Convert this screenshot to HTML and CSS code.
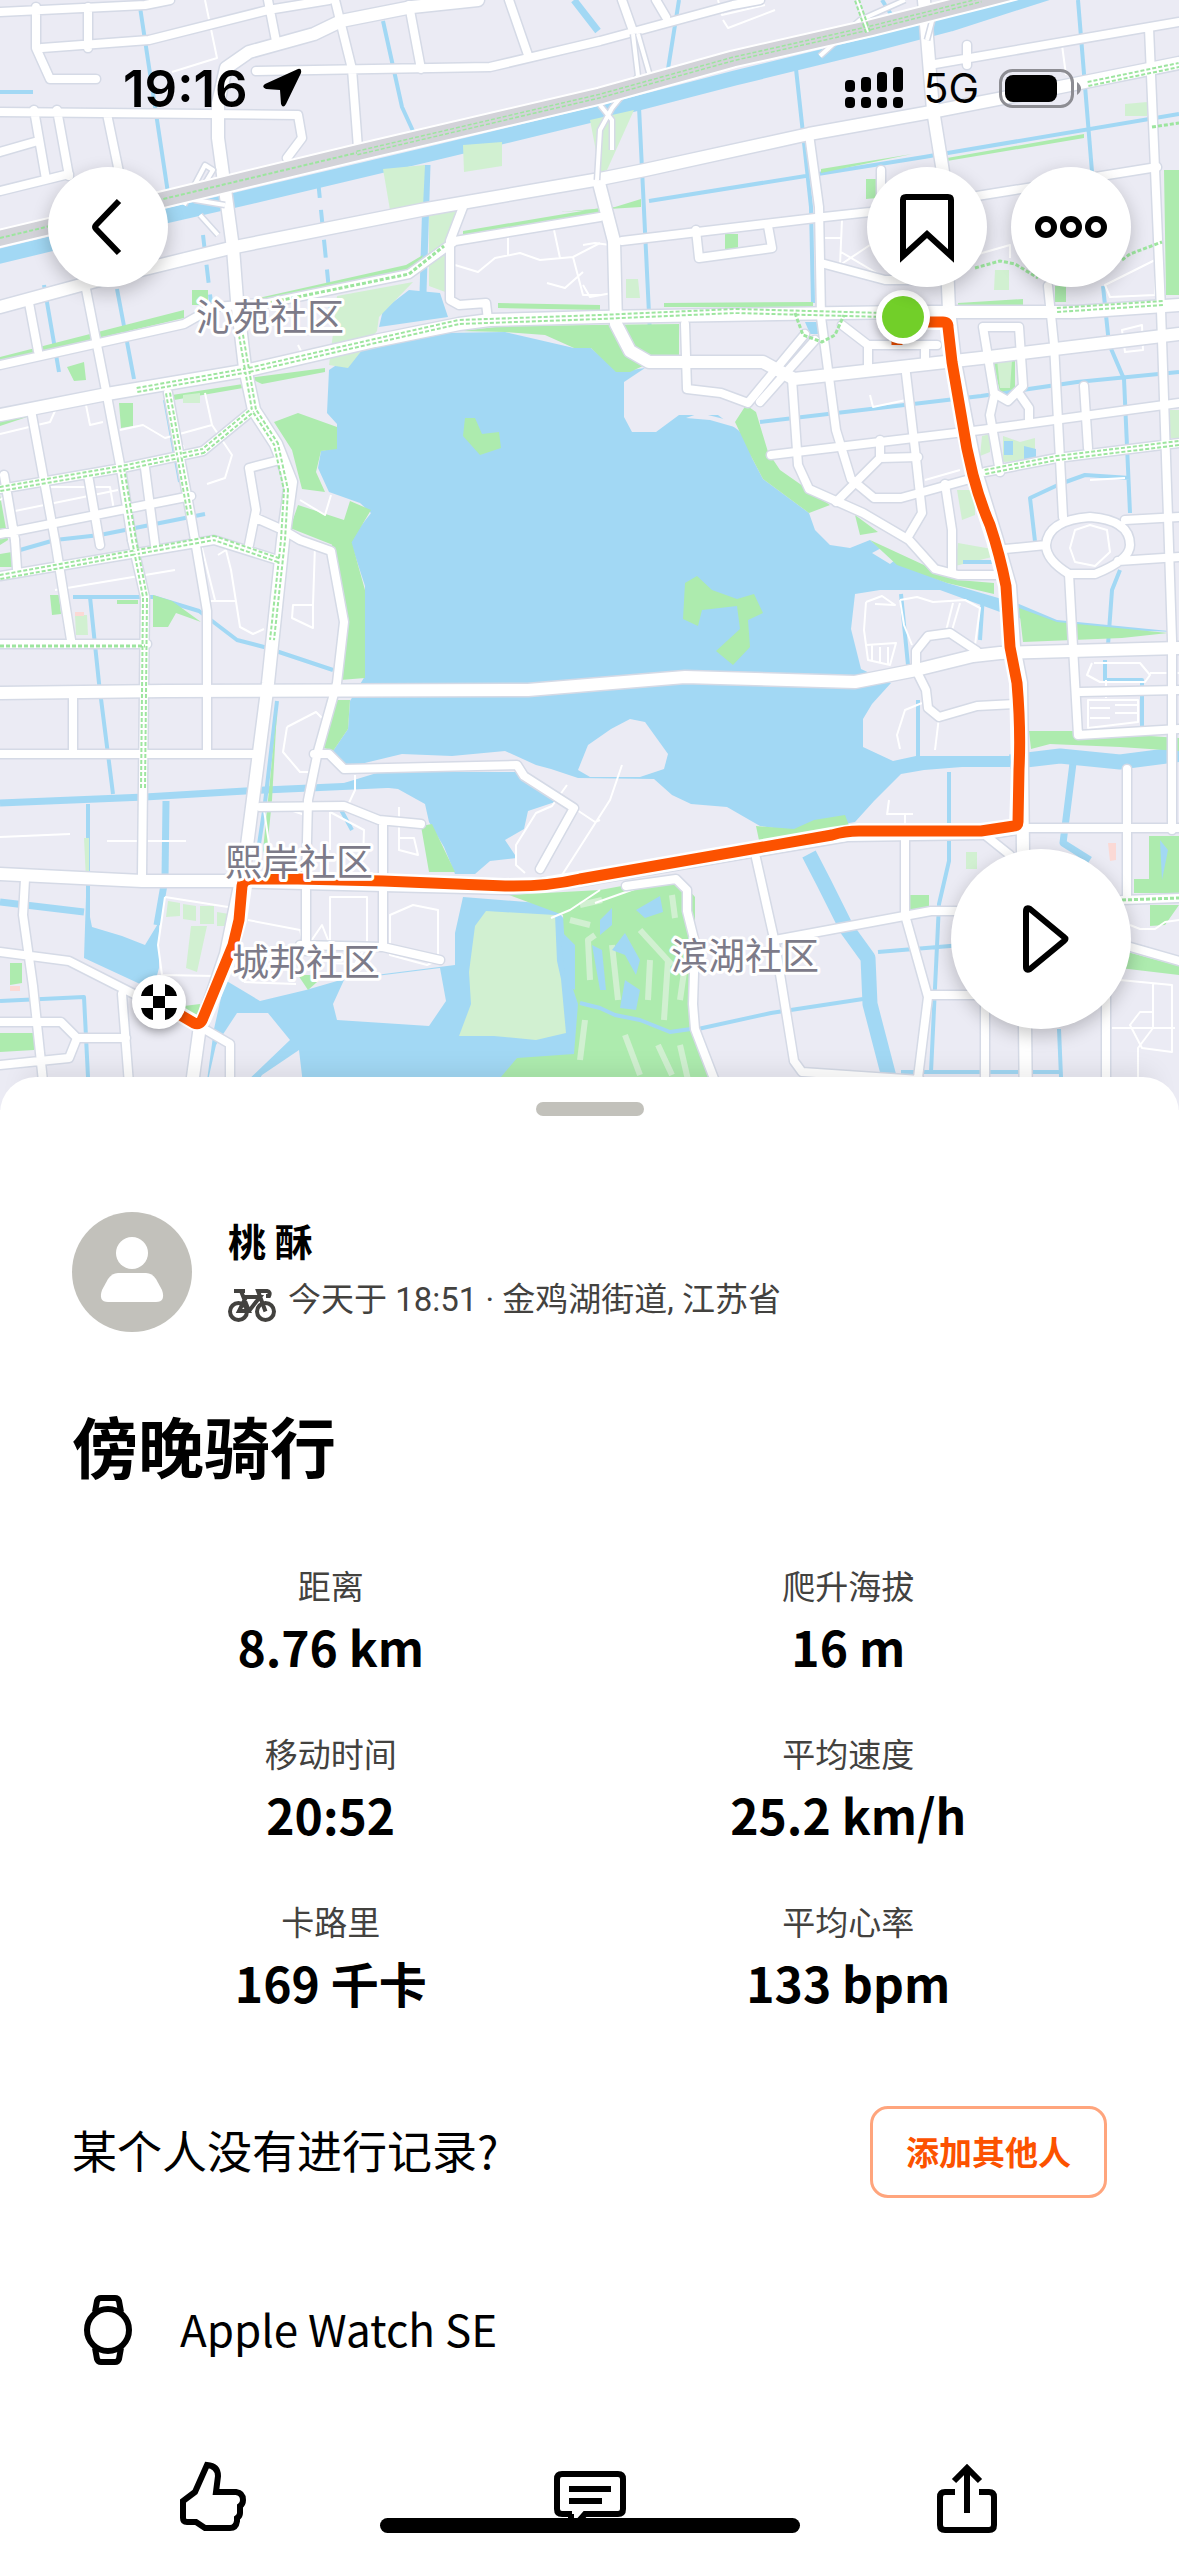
FILE: index.html
```html
<!DOCTYPE html>
<html lang="zh-CN">
<head>
  <meta charset="UTF-8">
  <title>傍晚骑行</title>
  <meta name="viewport" content="width=device-width, initial-scale=1.0, viewport-fit=cover">
  <link rel="stylesheet" href="styles.css">
</head>
<body>
  <div class="map">
    <svg class="map-canvas" viewBox="0 0 1179 1110" preserveAspectRatio="xMidYMin slice" aria-hidden="true">
      <defs>
        <!-- roads are drawn twice: grey casing, then white fill -->
        <g id="roads-big">
          <path d="M0 693L165 691L528 690L600 684L685 677L855 682L916 670L973 656L1000 653L1179 648"/>
          <path d="M0 415L107 394L249 370L375 341L459 324L490 320L600 317L905 312L1077 312L1179 305"/>
          <path d="M478 0L412 7L341 21L314 34L249 52L226 68L218 103V138L233 248L237 300L245 368L254 410L276 444L291 482L283 540L268 683L245 861L239 890L226 954L199 1033L193 1077V1110"/>
          <path d="M0 307L92 282L230 248L421 210L600 179L645 170L809 134L931 112L1060 87L1179 63"/>
          <path d="M0 874L142 881H230L383 885L509 888L580 880L847 835L985 833L1018 828"/>
          <path d="M924 0L933 110L943 172L949 310L955 362L966 420L977 475L997 540L1010 586L1014 647L1021 683L1023 850L1026 1110"/>
          <path d="M599 183L614 241L616 324L630 351L649 362H763L794 379L981 358L1179 334"/>
        </g>
        <g id="roads-mid">
          <path d="M809 134L819 207L821 317L836 430L851 479L874 498H901L970 479"/>
          <path d="M792 379L798 465L809 489L863 513L909 540L935 569L958 575H996"/>
          <path d="M905 365L916 458L922 513L909 535M945 484L952 530V570"/>
          <path d="M771 455L981 430L1179 403M985 472L1057 458L1179 443"/>
          <path d="M1048 286L1054 344L1063 517M1069 574L1073 647L1078 735L1179 729"/>
          <path d="M1149 28L1161 310L1168 517L1172 640V830M935 64L1179 22M967 45V65"/>
          <path d="M622 241L824 217L870 212L977 196L1157 167M821 263L885 280L945 280"/>
          <path d="M685 324L687 389L721 393L748 403L805 334M760 402L815 340M842 325L868 345H937M868 345V372M925 345V360"/>
          <path d="M983 327H1019L1023 386L1008 401L994 393L983 327M994 397L990 415L1000 472M1020 395L1029 408V420"/>
          <path d="M1084 386L1088 448M836 502L880 458L918 457M880 458V440"/>
          <path d="M1046 545Q1048 520 1090 517Q1130 520 1130 545Q1130 560 1095 574H1069Q1046 560 1046 545ZM1125 520L1179 517M1118 561L1179 557M1005 549L1046 545"/>
          <path d="M905 838V915L928 997L914 1110M756 858L775 943L794 1061L802 1072L920 1080"/>
          <path d="M775 940L931 911H962M928 995H985V1110M626 886L676 879L687 890V911L695 943L693 1004L695 1029L726 1110"/>
          <path d="M1127 769V897M1020 828H1179M1122 900L1179 898M1120 944L1179 961M1106 986V1110M985 835L1010 855"/>
          <path d="M916 670V651L928 636L950 633L977 651M916 670L926 690L928 708L939 717L977 706L1015 704M1080 692L1179 690"/>
          <path d="M25 879L23 915L33 986L46 1110M0 952L69 961L134 994M122 994L131 1110M0 1022H61L77 1038H126M77 1038L69 1058L0 1065M199 1026L230 1044V1110"/>
          <path d="M306 890V951M383 822V947L440 960M260 807L344 806L379 820L421 824M300 945L383 947"/>
          <path d="M283 530L300 540L331 551L344 622L337 683L318 751L308 800L306 880M314 754H329L344 769L517 765L524 776L574 808L540 869"/>
          <path d="M0 754H253M73 697V754M195 540L207 611V754M132 540L145 597L142 876M31 410L55 540L71 640M0 644H147M0 576L214 540L281 561M15 540L17 569"/>
          <path d="M0 489L122 468L203 451L253 410M0 534L191 496M86 289L107 396L122 475L132 540M168 393L191 517L195 540M4 475L15 540M88 475L100 545M145 468L155 545M276 461L249 468L256 510L249 545M256 518L283 530"/>
          <path d="M0 365L184 324L214 307L268 303L409 274L455 241L600 217M463 207L450 241V300L459 305L486 303L488 320M29 303L38 351"/>
          <path d="M0 152L38 141M0 191L69 174M34 110L46 179M57 110L69 176M107 114L119 172M0 112L298 115L302 138L287 158"/>
          <path d="M0 12L145 5L170 0M36 7V48L50 79H96M42 48L149 40L268 10L329 0M88 7V48M268 0L276 41M335 0L352 69L358 148M256 71L490 67L600 41L733 5L760 0M409 5L421 69M509 0L528 55M622 0L633 31M656 0L666 17"/>
          <path d="M696 230L699 258L772 248L768 226M881 170V205"/>
        </g>
        <path id="railway" d="M-20 243L161 200L360 152L600 96L733 59L870 28L981 0L1050 -18"/>
        <path id="ramps" d="M633 34L638 76L612 108L600 130L597 180M638 34L650 76M820 56L860 20L905 0M927 40L935 10M600 105L612 120V150M184 205L205 165L213 170L195 200L225 205M200 215L218 235"/>
        <path id="cycle-lanes" d="M137 390L249 370L375 341L459 322L600 317L735 311L885 315M241 335L254 410L276 444L286 490L283 540L272 640M857 0L868 32M1057 310L1163 303M985 472L1057 458L1179 443M1088 84L1179 65M0 577L214 538L281 561M122 468L134 540L145 597L143 790M168 393L190 516M0 489L122 468L203 451L253 410"/>
      </defs>

      <rect width="1179" height="1110" fill="#ebebf4"/>

      <!-- lake and ponds -->
      <g class="water">
        <path d="M329 370L383 334L505 332L574 348H591L618 372L645 368L624 382V417L632 432H656L679 415H718L738 430L746 437L752 458L763 479L786 496L809 513L815 530L830 545L850 548L870 540L897 563L947 583L1019 604L1057 620L1179 632L1050 628L1000 612L940 590L905 590L880 590L855 594L851 629L861 669L891 683L872 704L863 719V747L893 761L916 756H1010V767H962L924 770L901 774L874 801L855 822L800 832L760 826L727 807L691 804L672 795L654 779L578 778L551 769L536 765L505 751L452 756L402 754L344 768L333 751L348 729L350 701L365 676V586L350 540L371 513L360 503L329 492L318 468L321 451L337 448V424L327 413Z"/>
        <path d="M344 783L380 772L524 772L555 802L528 811L524 829L505 840L517 858L490 861L475 874H455L444 847L429 822L425 804L398 789Z"/>
        <path d="M409 290L440 293L448 317L379 327L383 310Z"/>
        <path d="M86 897L92 927L122 936L145 945L159 922V968L153 990L84 958Z"/>
        <path d="M225 980L260 1001L306 990L344 979L455 965V933L463 897L551 904L600 960V1110H203L214 1029Z"/>
      </g>
      <path d="M588 745L611 729L630 719L645 722L668 754L664 769L640 777H590L578 770Z" fill="#ebebf4"/>
      <path d="M237 1013H268L290 1040L243 1085H207L216 1045ZM299 1050L306 1110H240L262 1075ZM344 980L333 1004L337 1020L429 1026L446 1001L440 968Z" fill="#ebebf4"/>
      <path d="M686 418L700 413L728 420L738 428L710 420ZM872 553L885 546L900 556L890 564Z" fill="#ebebf4"/>

      <!-- canals -->
      <g class="canal">
        <path d="M170 0L140 7L168 193M117 289L134 379M165 400L180 482M383 21L402 107L413 131M0 92H33M44 285L59 372" />
        <path d="M679 0L668 69M639 107L651 355M796 69L811 207L813 303M649 201L924 157L1179 114M1078 0L1092 172M1103 286L1109 344L1124 379L1130 513M760 422L981 396L1077 382L1179 372M882 0L892 16M1036 550L1030 498L1060 484L1085 475L1130 478"/>
        <path d="M949 772V861L939 904L931 1072M918 700V758M901 594L908 665M698 1029L771 1013L863 999M878 952L962 945M1059 1029L1061 1077M901 1072H1060M1120 570L1112 590L1108 645M1105 660V680H1142V738"/>
        <path d="M73 597H153L199 611L237 640L264 647L333 670M90 597L99 683L113 794M277 701L264 811L258 851M88 804V920M0 1001L84 997L88 1077M20 550L55 540L100 535L205 514M983 595L980 640M340 808L352 830"/>
        <path d="M203 235L213 320M318 180L331 310" stroke-dasharray="18 12"/>
      </g>
      <g class="canal wide">
        <path d="M574 0L598 31M427 165L423 293M0 803L145 797L245 791L398 784M166 801L165 879L157 925M0 902L84 912M1073 763L1063 843L1090 860"/>
      </g>
      <g class="canal river">
        <path d="M-20 261L161 217L236 200L430 154L600 113L735 78L870 45L950 24L1050 -8"/>
        <path d="M809 854L824 883L847 929L868 958L870 1004L889 1077V1110M1010 762L1060 756L1120 762L1190 753"/>
      </g>

      <!-- parks -->
      <g class="park">
        <path d="M274 422L298 413L337 427V449L321 451L316 472L325 492L302 489L292 450ZM298 505L344 520L350 501L371 510L356 535L350 545L333 545L290 528ZM331 540H351L365 590V678L340 680L346 625Z"/>
        <path d="M330 700H350L348 729L333 751L318 746ZM465 418H475L482 434L499 432L501 448L480 455L463 436Z"/>
        <path d="M685 583L697 576L712 590L737 599L754 594L763 613L748 620L750 647L733 665L716 651L740 629L737 606L702 610L698 626L683 619Z"/>
        <path d="M459 331L505 326L679 324V360L645 365L630 372H616L591 348H574L545 335L505 332Z"/>
        <path d="M746 405L756 412L768 452L780 470L830 505L809 513L786 496L763 479L752 458L735 422ZM870 540L924 565L958 580L994 583V594L947 583L897 565ZM855 515L878 532L860 535Z"/>
        <path d="M1019 608L1057 622L1168 633L1122 638L1023 642ZM1029 731H1076L1179 738V751L1120 747L1050 744L1031 749ZM1164 170H1179V295H1166Z"/>
        <path d="M991 353H1015V389L1000 392ZM1149 836H1179V893H1134V879H1149ZM1150 905H1179L1165 925L1150 926ZM1120 950L1179 966V975L1120 968Z"/>
        <path d="M910 895H929V910H910ZM866 179H877V198L866 199ZM725 234H738V249H725ZM664 303L813 302V307H664ZM958 303L1023 299V305L958 307ZM821 169L912 154L821 173ZM947 158L1084 134V138L947 161ZM1055 286H1066V302H1055Z"/>
        <path d="M249 300L406 265L423 255L418 270L260 304ZM0 357L184 310V318L0 361ZM463 231L600 208V213L463 236ZM498 303L600 305V310L498 308ZM119 403H133V426L121 428ZM67 367L84 362L86 380L74 381ZM172 395L243 384V388L174 400ZM192 290H208V305H192ZM249 378L325 368V372L262 384ZM0 420L30 416L0 426ZM0 495L8 540L0 545ZM615 207L641 199V207L560 212Z"/>
        <path d="M153 595L172 601L201 622L176 613L168 627H153ZM50 595H59L61 614L52 615ZM0 554L12 552V567H0ZM421 826L432 824L455 872H429ZM0 1033H34V1050L0 1052ZM10 963H22V983L10 985ZM298 975H325L308 990ZM184 1006L200 1004L198 1022ZM117 600H138V604H117ZM277 710L272 800L266 860L263 850ZM756 826L794 829L814 820L845 815L850 828L760 845Z"/>
        <path d="M509 895L600 890L676 876L695 897V951L691 1004L714 1077L726 1110H495L501 1077L517 1058L574 1054L578 1004L566 968L563 915Z"/>
      </g>
      <g class="park-light">
        <path d="M486 911L555 915L557 961L561 979L566 1033L536 1040L494 1036L459 1036L471 1004L469 972L475 926Z"/>
        <path d="M383 169L425 165L423 207L390 210ZM463 145L502 142V166L464 172ZM429 213L459 210L448 293L429 286ZM337 296L413 282L379 317L377 331L348 368L329 365L333 334ZM590 120L634 110L607 170L600 172Z"/>
        <path d="M626 279H638L640 298H626ZM997 360H1012L1010 388H1000ZM995 270H1009V290H994ZM966 852H977V869H966ZM75 615H87L88 635H76ZM183 395L200 393V403H183ZM168 901L180 903V916L166 917ZM183 904L196 906V921L183 919ZM200 906H214V924H200ZM217 912L229 914V926H217ZM191 926H207L197 972L186 968ZM958 543L992 549V557L955 566ZM1125 104L1147 102V116H1125ZM982 436L990 434V452L980 456ZM1003 436L1020 442L1035 438V460L1003 462ZM957 490H975V515L962 520ZM1170 410H1179V438H1170ZM84 838H89V880H86Z"/>
      </g>
      <g class="fairway">
        <path d="M590 980L588 940L595 935M612 945L618 1000M640 930L672 965M672 895L675 918M650 960L648 1000M668 960L664 1020M685 965L680 1000M625 1035L640 1075M658 1045L672 1075M680 1045L688 1080M580 905L602 900M570 920L590 925M585 1020L580 1060"/>
      </g>
      <g class="water">
        <path d="M600 920L612 908V925L600 935ZM636 910L660 896L663 912L645 918ZM592 945L602 950L606 990H600ZM612 950L625 933L640 960L636 975L625 955ZM625 980L640 990L636 1010L620 1008ZM1004 441H1013V455H1004ZM1024 446L1036 449V459H1024ZM1160 840L1168 850L1162 880ZM805 322H818V334H810ZM560 930L575 945V990L566 985Z"/>
      </g>
      <path class="canal-line" d="M580 1003L600 1008L615 1015L640 1020L670 1032L698 1028M963 562H993"/>
      <path d="M1108 843H1116V860L1110 861ZM75 612H84V616H75ZM10 986H20V991H10Z" fill="#fbd9d5"/>

      <!-- footpaths -->
      <g class="paths">
        <path d="M205 0L217 58L172 72M0 434L50 422L60 400L84 395L90 425L103 422M0 500L18 487H110L114 510L70 522M120 430L143 425L165 438L212 425L205 393M212 425L232 455L225 478L207 484M10 512L118 490M12 532L180 498M300 500L325 515L331 495M298 345L303 355M183 445L190 500L215 600"/>
        <path d="M508 235V255M554 230L560 258M455 265L478 272L495 258L520 253L540 260L573 257L600 243M573 257L583 295L600 295M583 272L565 288L547 283"/>
        <path d="M583 245L595 243L610 245M583 285L590 297L612 293M842 220L840 265L870 245M825 238H842M841 252L880 275M870 395L873 407L906 400M925 480L960 470M965 200L1015 192M975 255L1010 245V258M1105 285L1155 260V295L1110 297ZM1122 330L1142 325L1143 350L1125 352Z"/>
        <path d="M718 0L722 15L765 5M723 20L728 28L775 10M1062 45L1066 75M1090 480L1125 478"/>
        <path d="M0 837L70 834M107 841H186M264 810H290L305 815M264 810L270 850M330 812L364 830L363 860M330 812V850M399 807V850L418 855L414 838H398M330 897H367V945L355 964L330 963ZM390 915L413 905L438 910V960L427 965L390 955ZM248 920L300 930L305 950L322 925L330 945M244 982L296 984M165 897L228 907M165 897L158 945L162 975L215 976"/>
        <path d="M287 727L316 712L322 718M287 727L283 752L300 772H310M293 605H313V628L292 618ZM315 545L313 605M218 555L226 550L231 570L240 627L253 634L264 629M210 601H235M55 590L175 570M355 775V790L348 805M567 785L552 806L536 813L516 845V865L525 873M574 808L595 822L600 820M622 765L610 800L580 847L562 875M551 918L570 910L600 890M595 903L640 887"/>
        <path d="M866 602L864 630L868 660L890 665L896 643L866 645M866 602L882 596L895 605L875 604M872 645V660M880 647V662M888 647V664M900 600L917 597L933 602L965 600L980 608L975 645M953 603L945 635M960 603L950 637M900 600L904 625L912 645M922 703L905 710L897 735L900 749M939 717L935 750M887 815L889 800M887 814H913M905 815V830"/>
        <path d="M1070 548L1075 562L1095 566L1110 552L1107 530L1090 525L1075 530ZM1094 663H1140L1150 675L1145 682H1100L1087 675L1092 663M1088 700H1138V722L1088 728ZM1090 708H1110M1090 718H1110M1115 705H1138M1115 713H1138M1106 680V698M1150 673H1179M1130 925L1140 929H1155L1165 922L1179 920"/>
        <path d="M1120 980L1172 985V1052L1142 1048L1130 1025L1140 1012H1153V984M1153 1012V1028L1138 1048V1110M1112 1028H1175"/>
      </g>

      <!-- streets -->
      <g class="casing"><use href="#roads-mid" stroke-width="11"/><use href="#roads-big" stroke-width="15"/></g>
      <g class="street"><use href="#roads-mid" stroke-width="8"/><use href="#roads-big" stroke-width="12"/></g>

      <!-- railway -->
      <g class="rail">
        <use href="#ramps" stroke="#d5dae6" stroke-width="7"/>
        <use href="#ramps" stroke="#fff" stroke-width="4"/>
        <use href="#railway" stroke="#fff" stroke-width="19"/>
        <use href="#railway" stroke="#d3d3d9" stroke-width="15"/>
      </g>

      <!-- cycle lanes -->
      <g class="lane">
        <path d="M0 238L360 152" stroke-width="2"/>
        <path d="M357 153L600 96L733 59L870 28L981 0" stroke-width="5"/>
        <path class="lane-gap rail-gap" d="M357 153L600 96L733 59L870 28L981 0"/>
        <use href="#cycle-lanes" stroke-width="6"/>
        <use href="#cycle-lanes" class="lane-gap"/>
        <path d="M268 303L409 274L444 246M0 646H145M795 313L803 335L822 342L835 335L844 315M975 268L1000 261L1015 264L1038 278M1122 260L1130 254L1162 242M1122 900L1179 898M1152 127L1179 123" stroke-width="3"/>
      </g>

      <!-- recorded ride -->
      <path class="route-edge" d="M897 345V325L928 322H947L952 362L962 420L973 475L994 540L1006 586L1010 647L1017 683L1019 769L1017 826L981 831H859L832 835L580 879L543 885L505 886L383 881L245 879L239 920L226 965L203 1020L197 1024L165 1006"/>
      <path class="route" d="M897 345V325L928 322H943Q948 322 948 327L952 362L962 420Q966 448 973 475Q980 502 990 525Q1000 555 1006 586L1010 647L1017 683Q1021 730 1019 769L1018 822Q1018 826 1014 826L981 831H859Q845 831 832 835L580 879Q545 887 505 886L383 881L298 879H250Q243 880 242 886L239 920L233 945L203 1018Q200 1026 194 1023L165 1006"/>

      <g class="place">
        <text x="270" y="331">沁苑社区</text>
        <text x="299" y="876">熙岸社区</text>
        <text x="306" y="976">城邦社区</text>
        <text x="745" y="970">滨湖社区</text>
      </g>

      <!-- start / finish -->
      <g class="pin">
        <circle cx="903" cy="317" r="27" fill="#fff"/>
        <circle cx="903" cy="317" r="21" fill="#72cf29"/>
      </g>
      <g class="pin">
        <circle cx="159" cy="1002" r="27" fill="#fff"/>
        <path d="M141 996Q143 986 153 984V996ZM165 984Q175 986 177 996H165ZM153 996H165V1008H153ZM141 1008H153V1020Q143 1018 141 1008ZM165 1008H177Q175 1018 165 1020Z"/>
      </g>
    </svg>

    <div class="status-bar">
      <div class="status-left">
        <span class="time">19:16</span>
        <svg class="location-icon" viewBox="0 0 40 40" aria-hidden="true"><path d="M36 1Q40 0 39 5L24 36Q21 41 19 36L18 22L4 21Q-1 19 3 16Z"/></svg>
      </div>
      <div class="status-right">
        <svg class="signal-icon" viewBox="0 0 58 42" aria-hidden="true">
          <rect x="0" y="13" width="10" height="12" rx="4"/><rect x="16" y="10" width="10" height="15" rx="4"/><rect x="32" y="5" width="10" height="20" rx="4"/><rect x="48" y="0" width="10" height="25" rx="4"/>
          <rect x="0" y="30" width="10" height="11" rx="4"/><rect x="16" y="30" width="10" height="11" rx="4"/><rect x="32" y="30" width="10" height="11" rx="4"/><rect x="48" y="30" width="10" height="11" rx="4"/>
        </svg>
        <span class="network">5G</span>
        <svg class="battery-icon" viewBox="0 0 82 39" aria-hidden="true">
          <rect x="1.5" y="1.5" width="72" height="36" rx="12" fill="none" stroke="#8d8d93" stroke-width="3"/>
          <rect x="6" y="6" width="52" height="27" rx="8"/>
          <path d="M78 13Q82 16 82 19.500Q82 23 78 26Z" fill="#8d8d93"/>
        </svg>
      </div>
    </div>

    <div class="map-controls">
      <button class="round-btn" aria-label="返回">
        <svg width="60" height="60" viewBox="0 0 60 60"><path d="M41 4L18 28Q16 30 18 32L41 56"/></svg>
      </button>
      <div class="control-group">
        <button class="round-btn" aria-label="收藏">
          <svg width="72" height="72" viewBox="0 0 72 72"><path d="M12 9Q12 6 15 6H57Q60 6 60 9V65L36 43L12 65Z"/></svg>
        </button>
        <button class="round-btn" aria-label="更多">
          <svg width="72" height="72" viewBox="0 0 72 72"><circle cx="11" cy="36" r="8"/><circle cx="36" cy="36" r="8"/><circle cx="61" cy="36" r="8"/></svg>
        </button>
      </div>
    </div>
    <button class="round-btn play-btn" aria-label="播放">
      <svg width="72" height="72" viewBox="0 0 72 72"><path d="M21 8Q21 4 25 6L59 34Q62 36 59 38L25 66Q21 68 21 64Z"/></svg>
    </button>
  </div>

  <main class="sheet">
    <div class="handle"></div>

    <div class="profile">
      <svg class="avatar" viewBox="0 0 120 120" aria-hidden="true">
        <circle cx="60" cy="60" r="60" fill="#c2c1bb"/>
        <circle cx="60" cy="41" r="16" fill="#fff"/>
        <path d="M46 61H74Q80 61 84 67L90 78Q94 90 84 90H36Q26 90 30 78L36 67Q40 61 46 61Z" fill="#fff"/>
      </svg>
      <div class="profile-text">
        <div class="name">桃 酥</div>
        <div class="meta">
          <svg class="bike-icon" viewBox="0 -12 48 46" aria-hidden="true"><circle cx="10.500" cy="22.500" r="8.500"/><circle cx="37.500" cy="22.500" r="8.500"/><path d="M6 2H17M13 2L21 22H11L18 8H32L21 22M37.500 22.500L30 2H39Q43 3 41 7H38"/></svg>
          <span>今天于 18:51 · 金鸡湖街道, 江苏省</span>
        </div>
      </div>
    </div>

    <h1 class="title">傍晚骑行</h1>

    <dl class="stats">
      <div class="stat"><dt>距离</dt><dd>8.76 km</dd></div>
      <div class="stat"><dt>爬升海拔</dt><dd>16 m</dd></div>
      <div class="stat"><dt>移动时间</dt><dd>20:52</dd></div>
      <div class="stat"><dt>平均速度</dt><dd>25.2 km/h</dd></div>
      <div class="stat"><dt>卡路里</dt><dd>169 千卡</dd></div>
      <div class="stat"><dt>平均心率</dt><dd>133 bpm</dd></div>
    </dl>

    <div class="invite">
      <span class="row-text">某个人没有进行记录?</span>
      <button class="add-btn">添加其他人</button>
    </div>

    <div class="device">
      <svg class="line-icon" viewBox="0 0 72 72" aria-hidden="true"><circle cx="36" cy="36" r="21"/><path d="M23 18L25 7Q26 4 29 4H43Q46 4 47 7L49 18M23 54L25 65Q26 68 29 68H43Q46 68 47 65L49 54"/></svg>
      <span class="row-text">Apple Watch SE</span>
    </div>
  </main>

  <nav class="action-bar">
    <button class="action-btn" aria-label="点赞">
      <svg class="line-icon" viewBox="0 0 72 72"><path d="M30 4Q41 5 41 15L39 31H59Q66 32 66 39Q66 43 63 45V52Q63 55 60 57V60Q59 67 53 67H28L19 61H10Q6 61 6 57V40L18 31Z"/></svg>
    </button>
    <button class="action-btn" aria-label="评论">
      <svg class="line-icon" viewBox="0 0 72 72"><path d="M18 53H8Q3 53 3 48V18Q3 13 8 13H64Q69 13 69 18V48Q69 53 64 53H31L17 69V53M15 28H57M15 40H48"/></svg>
    </button>
    <button class="action-btn" aria-label="分享">
      <svg class="line-icon" viewBox="0 0 72 72"><path d="M24 31H14Q9 31 9 36V64Q9 69 14 69H58Q63 69 63 64V36Q63 31 58 31H48M36 52V8M23 20L36 7L49 20"/></svg>
    </button>
    <div class="home-indicator"></div>
  </nav>
</body>
</html>
```

FILE: styles.css
```css
* {
  box-sizing: border-box;
}
html, body {
  margin: 0;
  padding: 0;
  background: #fff;
  color: #000;
  font-family: 'Noto Sans CJK SC', 'Noto Sans', sans-serif;
}
body {
  min-height: 100vh;
  display: flex;
  flex-direction: column;
}
button {
  font-family: inherit;
  border: none;
  padding: 0;
  cursor: pointer;
}

/* map */
.map {
  position: relative;
  width: 100%;
  aspect-ratio: 1179 / 1110;
  overflow: hidden;
  background: #ebebf4;
}
.map-canvas {
  position: absolute;
  inset: 0;
  width: 100%;
  height: 100%;
}
.map-canvas path { stroke-linejoin: round; }
.water { fill: #a2d8f4; }
.canal, .canal-line { fill: none; stroke: #a2d8f4; stroke-width: 4; }
.canal.wide { stroke-width: 7; }
.canal.river { stroke-width: 15; }
.park { fill: #adebae; }
.park-light { fill: #d1f0d1; }
.fairway { fill: none; stroke: #d1f0d1; stroke-width: 6; }
.paths { fill: none; stroke: #fff; stroke-width: 2; }
.casing { fill: none; stroke: #d5dae6; stroke-linecap: round; }
.street { fill: none; stroke: #fff; stroke-linecap: round; }
.rail { fill: none; }
.lane { fill: none; stroke: #9de59f; stroke-dasharray: 4 2; }
.lane-gap { stroke: #fff; stroke-width: 2; stroke-dasharray: none; }
.rail-gap { stroke: #d3d3d9; }
.route-edge { fill: none; stroke: #fff; stroke-width: 16; }
.route { fill: none; stroke: #fc5200; stroke-width: 11; }
.place {
  font-size: 37px;
  fill: #7d7b89;
  stroke: #fff;
  stroke-width: 6px;
  stroke-linejoin: round;
  paint-order: stroke;
  text-anchor: middle;
}
.pin { filter: drop-shadow(0 3px 5px rgba(0, 0, 0, 0.35)); }

/* status bar */
.status-bar {
  position: relative;
  display: flex;
  justify-content: space-between;
  align-items: center;
  height: 72px;
  margin-top: 52px;
  padding: 0 98px 0 123px;
  font-family: Inter, sans-serif;
}
.status-left, .status-right {
  display: flex;
  align-items: center;
}
.status-left { gap: 14px; }
.time { font-size: 51px; font-weight: 600; }
.network { font-size: 41px; font-weight: 400; margin: 0 20px; }
.location-icon { width: 40px; height: 40px; }
.signal-icon { width: 58px; height: 42px; }
.battery-icon { width: 82px; height: 39px; }

/* floating buttons */
.map-controls {
  position: relative;
  display: flex;
  justify-content: space-between;
  margin-top: 43px;
  padding: 0 48px;
}
.control-group {
  display: flex;
  gap: 24px;
}
.round-btn {
  width: 120px;
  height: 120px;
  border-radius: 50%;
  background: #fff;
  box-shadow: 0 6px 18px rgba(0, 0, 0, 0.22);
  display: flex;
  align-items: center;
  justify-content: center;
}
.round-btn svg {
  fill: none;
  stroke: #000;
  stroke-width: 6;
}
.play-btn {
  position: absolute;
  right: 48px;
  bottom: 81px;
  width: 180px;
  height: 180px;
}

/* bottom sheet */
.sheet {
  position: relative;
  margin-top: -33px;
  padding: 25px 72px 0;
  border-radius: 36px 36px 0 0;
  background: #fff;
  box-shadow: 0 -30px 24px -24px rgba(0, 0, 0, 0.08);
}
.handle {
  width: 108px;
  height: 14px;
  margin: 0 auto;
  border-radius: 7px;
  background: #c2c1bb;
}
.profile {
  display: flex;
  align-items: center;
  gap: 36px;
  margin-top: 96px;
}
.avatar {
  width: 120px;
  height: 120px;
}
.name {
  font-size: 38px;
  font-weight: 700;
  line-height: 56px;
}
.meta {
  display: flex;
  align-items: center;
  gap: 12px;
  font-family: Roboto, 'Noto Sans CJK SC', sans-serif;
  font-size: 33px;
  line-height: 64px;
  color: #43423f;
}
.bike-icon {
  width: 48px;
  height: 46px;
  fill: none;
  stroke: #43423f;
  stroke-width: 4;
}
.title {
  margin: 72px 0 0;
  font-size: 66px;
  font-weight: 700;
  line-height: 80px;
}
.stats {
  display: grid;
  grid-template-columns: 1fr 1fr;
  row-gap: 50px;
  margin: 77px 0 0;
  text-align: center;
}
.stat dt {
  font-size: 33px;
  line-height: 48px;
  color: #43423f;
}
.stat dd {
  margin: 5px 0 1px;
  font-size: 48px;
  font-weight: 700;
  line-height: 64px;
}
.invite {
  display: flex;
  align-items: center;
  justify-content: space-between;
  margin-top: 91px;
}
.row-text {
  padding-bottom: 4px;
  font-size: 45px;
  line-height: 64px;
}
.add-btn {
  height: 92px;
  padding: 0 33px 3px;
  border: 3px solid #ffa57d;
  border-radius: 18px;
  background: #fff;
  color: #fc5200;
  font-size: 33px;
  font-weight: 700;
}
.device {
  display: flex;
  align-items: center;
  gap: 36px;
  margin-top: 96px;
}
.device .row-text { font-size: 44px; }
.line-icon {
  width: 72px;
  height: 72px;
  fill: none;
  stroke: #000;
  stroke-width: 6;
}

/* bottom actions */
.action-bar {
  position: relative;
  display: grid;
  grid-template-columns: repeat(3, 1fr);
  margin-top: auto;
  padding: 88px 24px 23px;
}
.action-btn {
  display: flex;
  justify-content: center;
  background: none;
}
.home-indicator {
  position: absolute;
  left: 50%;
  bottom: 23px;
  width: 420px;
  height: 15px;
  margin-left: -210px;
  border-radius: 8px;
  background: #000;
}
```
